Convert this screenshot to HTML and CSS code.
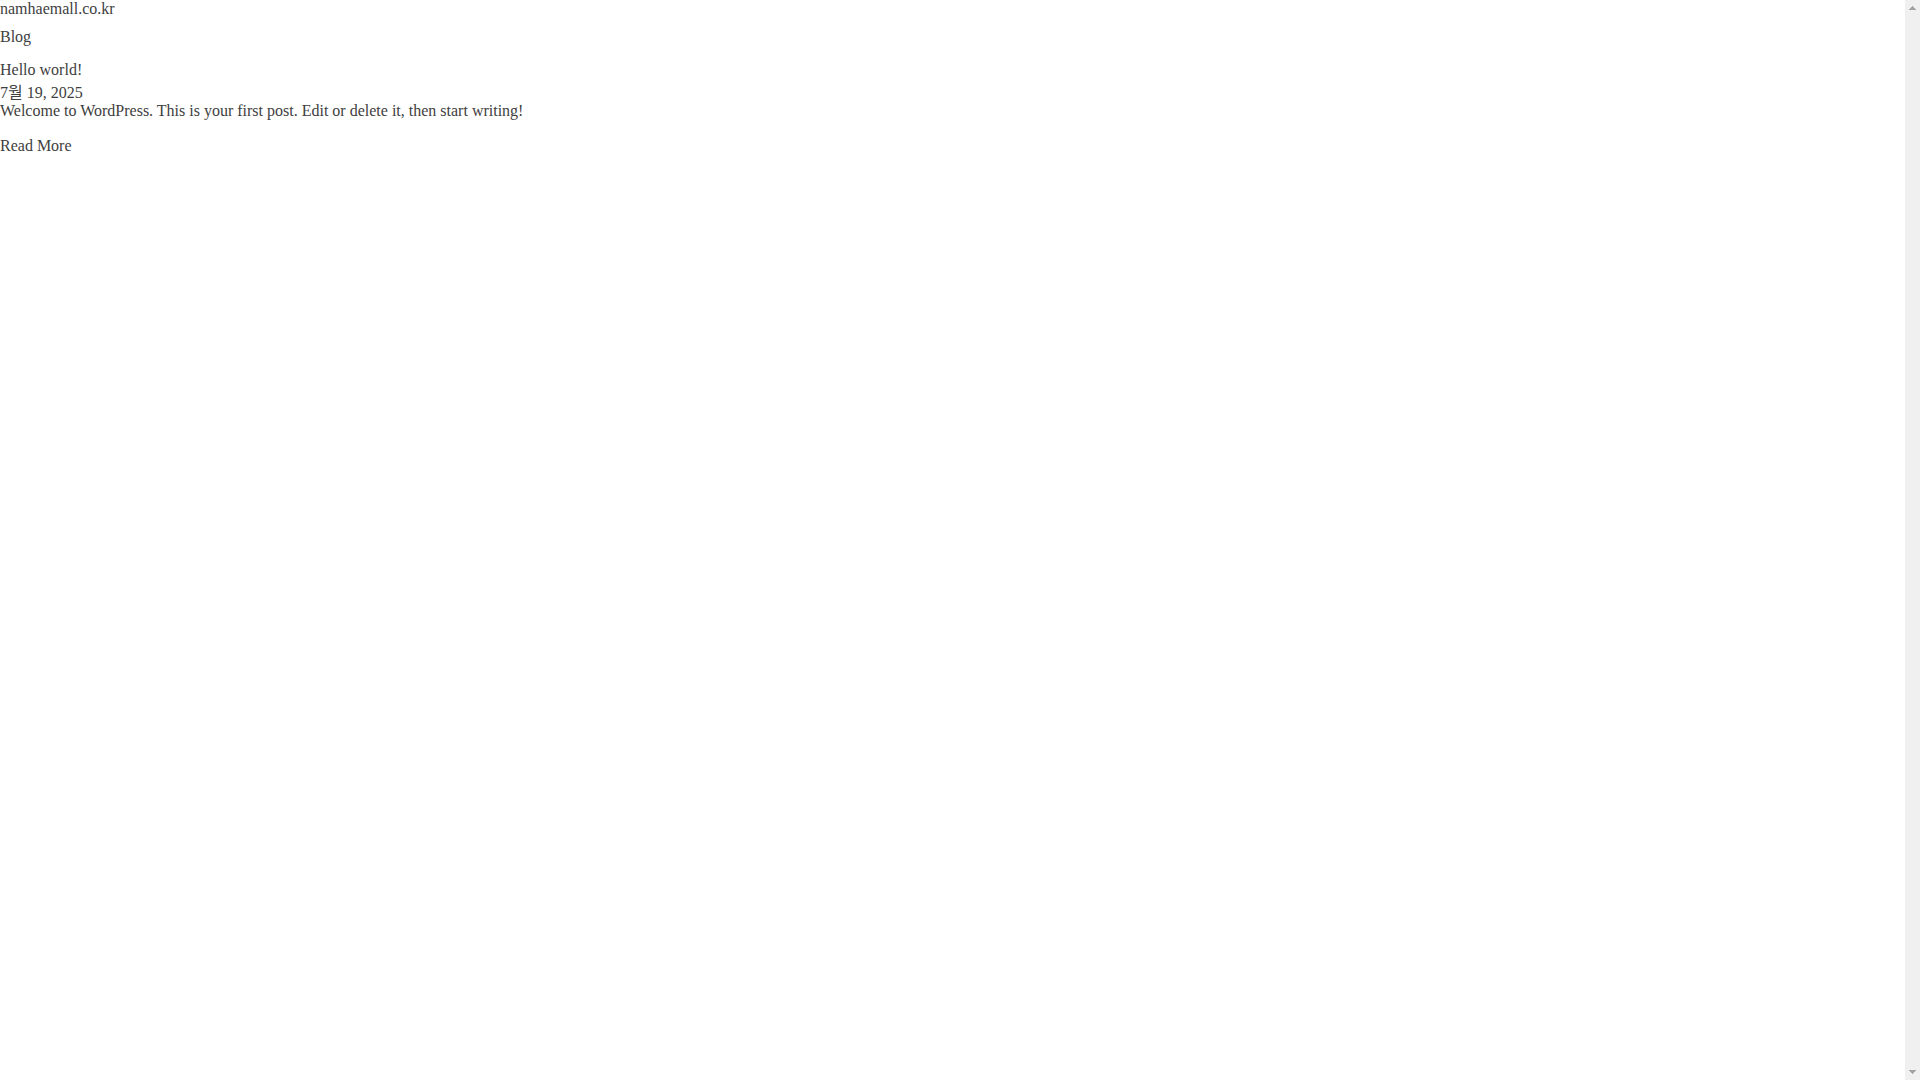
FILE: index.html
```html
<!DOCTYPE html>
<html lang="ko">

<head>
    <meta charset="UTF-8">
    <meta name="viewport" content="width=device-width, initial-scale=1.0">
    <title>namhaemall.co.kr</title>
    <link rel="stylesheet" href="styles.css">
</head>

<body>
    <div class="site">
        <header class="site-header">
            <a href="#">namhaemall.co.kr</a>
        </header>

        <main class="site-main">
            <h1 class="page-title">Blog</h1>

            <article class="post">
                <h2 class="post-title"><a href="#">Hello world!</a></h2>
                <div class="post-date">7월 19, 2025</div>
                <p class="post-excerpt">Welcome to WordPress. This is your first post. Edit or delete it, then start writing!</p>
                <a class="read-more" href="#">Read More</a>
            </article>
        </main>
    </div>

    <div class="scroll-track" aria-hidden="true">
        <svg class="scroll-arrow" width="7" height="4" viewBox="0 0 7 4" shape-rendering="crispEdges">
            <path d="M3 0h1v1h1v1h1v1h1v1H0V3h1V2h1V1h1z"/>
        </svg>
        <svg class="scroll-arrow" width="7" height="4" viewBox="0 0 7 4" shape-rendering="crispEdges">
            <path d="M0 0h7v1H6v1H5v1H4v1H3V3H2V2H1V1H0z"/>
        </svg>
    </div>
</body>

</html>
```

FILE: styles.css
```css
body {
    display: flex;
    min-height: 100vh;
    margin: 0;
    font-family: "Liberation Serif", "Noto Sans CJK KR", serif;
    font-size: 16px;
    line-height: 18px;
    color: #404040;
    background-color: #fff;
}

a {
    text-decoration: none;
    color: inherit;
}

.site {
    flex: 1;
}

.page-title,
.post-title {
    margin: 0;
    font-size: 16px;
    font-weight: normal;
}

.page-title {
    padding: 10px 0;
}

.post-title {
    padding: 5px 0;
}

.post-excerpt {
    margin: 0 0 17px;
}

/* scroll bar down the right edge */
.scroll-track {
    display: flex;
    flex-direction: column;
    justify-content: space-between;
    align-items: center;
    box-sizing: border-box;
    width: 15px;
    padding: 6px 0;
    background-color: #f0f0f0;
}

.scroll-arrow {
    display: block;
    fill: #a3a3a3;
}
```
